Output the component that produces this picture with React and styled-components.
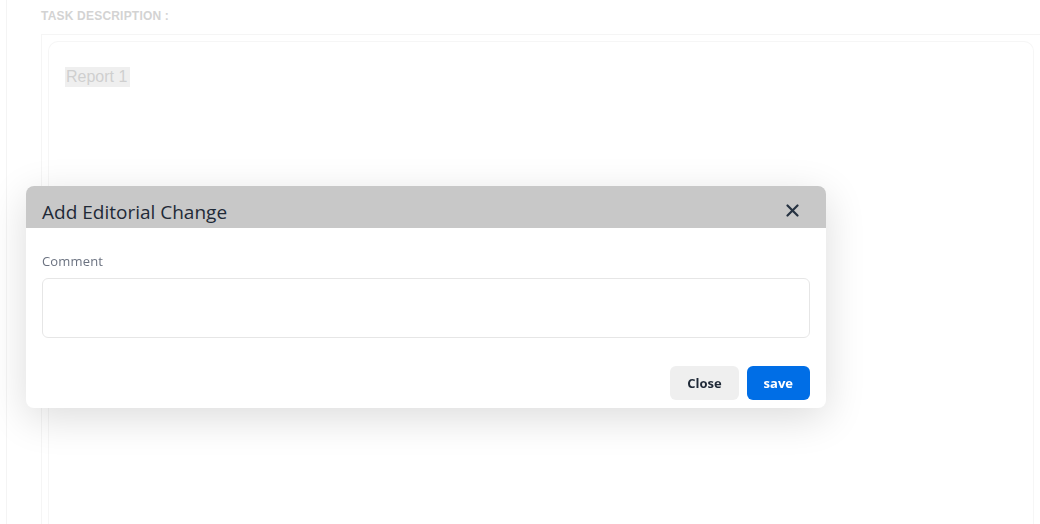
import React from "react";
import styled, { createGlobalStyle } from "styled-components";

const GlobalStyle = createGlobalStyle`
  html, body {
    margin: 0;
    padding: 0;
    background: #ffffff;
    height: 100%;
    overflow: hidden;
  }
  * {
    box-sizing: border-box;
  }
`;

const Page = styled.div`
  height: 524px;
  padding-left: 6px;
  display: flex;
`;

const Content = styled.main`
  flex: 1;
  border-left: 1px solid #f4f4f4;
  padding: 8px 0 0 34px;
  display: flex;
  flex-direction: column;
  font-family: "Liberation Sans", Arial, sans-serif;
`;

const SectionLabel = styled.h4`
  margin: 0;
  font-size: 12px;
  font-weight: 700;
  color: #d3d3d3;
  line-height: 16px;
  letter-spacing: 0.2px;
`;

const Outer = styled.div`
  flex: 1;
  margin-top: 10px;
  border-top: 1px solid #f5f5f5;
  border-left: 1px solid #f5f5f5;
  padding: 6px 6px 0 6px;
  display: flex;
`;

const Editor = styled.div`
  flex: 1;
  border: 1px solid #f6f6f6;
  border-bottom: none;
  border-radius: 10px 10px 0 0;
  padding: 25px 16px;
`;

const Highlight = styled.span`
  display: inline-block;
  background: #efefef;
  color: #cfcfcf;
  font-size: 16px;
  line-height: 20px;
  padding: 0 3px 0 1px;
`;

const Modal = styled.div`
  position: fixed;
  left: 26px;
  top: 186px;
  width: 800px;
  background: #ffffff;
  border-radius: 8px;
  box-shadow: 0 10px 40px rgba(0, 0, 0, 0.14);
  overflow: hidden;
  font-family: "Open Sans", "Noto Sans", sans-serif;
`;

const Header = styled.div`
  height: 42px;
  background: #c8c8c8;
  display: flex;
  align-items: center;
  justify-content: space-between;
  padding: 0 27px 0 16px;
`;

const Title = styled.h3`
  margin: 0;
  font-size: 19px;
  font-weight: 400;
  color: #1f2a37;
  line-height: 24px;
  padding-top: 9px;
`;

const IconButton = styled.button`
  border: none;
  background: none;
  padding: 0;
  width: 13px;
  height: 13px;
  display: flex;
  align-items: center;
  justify-content: center;
  color: #273342;
  cursor: pointer;
  margin-top: 7px;
`;

const Body = styled.div`
  padding: 24px 16px 0 16px;
  display: flex;
  flex-direction: column;
`;

const FieldLabel = styled.label`
  font-size: 13px;
  letter-spacing: 0.15px;
  color: #6b7280;
  line-height: 18px;
  margin-bottom: 8px;
`;

const TextArea = styled.textarea`
  height: 60px;
  border: 1px solid #e6e6e6;
  border-radius: 6px;
  resize: none;
  outline: none;
  font-family: inherit;
`;

const Footer = styled.div`
  display: flex;
  justify-content: flex-end;
  gap: 8px;
  padding: 28px 16px 8px 16px;
`;

const Button = styled.button`
  height: 34px;
  padding: 0 17px;
  border: none;
  border-radius: 6px;
  background: ${(p) => (p.primary ? "#006ee6" : "#efefef")};
  color: ${(p) => (p.primary ? "#ffffff" : "#1f2937")};
  font-family: "Open Sans", "Noto Sans", sans-serif;
  font-size: 13px;
  font-weight: 700;
  cursor: pointer;
`;

export default function App() {
  return (
    <>
      <GlobalStyle />
      <Page>
        <Content>
          <SectionLabel>TASK DESCRIPTION :</SectionLabel>
          <Outer>
            <Editor>
              <Highlight>Report 1</Highlight>
            </Editor>
          </Outer>
        </Content>
      </Page>
      <Modal>
        <Header>
          <Title>Add Editorial Change</Title>
          <IconButton aria-label="close">
            <svg width="13" height="13" viewBox="0 0 13 13">
              <path
                d="M1.5 1.5 L11.5 11.5 M11.5 1.5 L1.5 11.5"
                stroke="currentColor"
                strokeWidth="2.2"
                strokeLinecap="round"
              />
            </svg>
          </IconButton>
        </Header>
        <Body>
          <FieldLabel>Comment</FieldLabel>
          <TextArea />
        </Body>
        <Footer>
          <Button>Close</Button>
          <Button primary>save</Button>
        </Footer>
      </Modal>
    </>
  );
}
